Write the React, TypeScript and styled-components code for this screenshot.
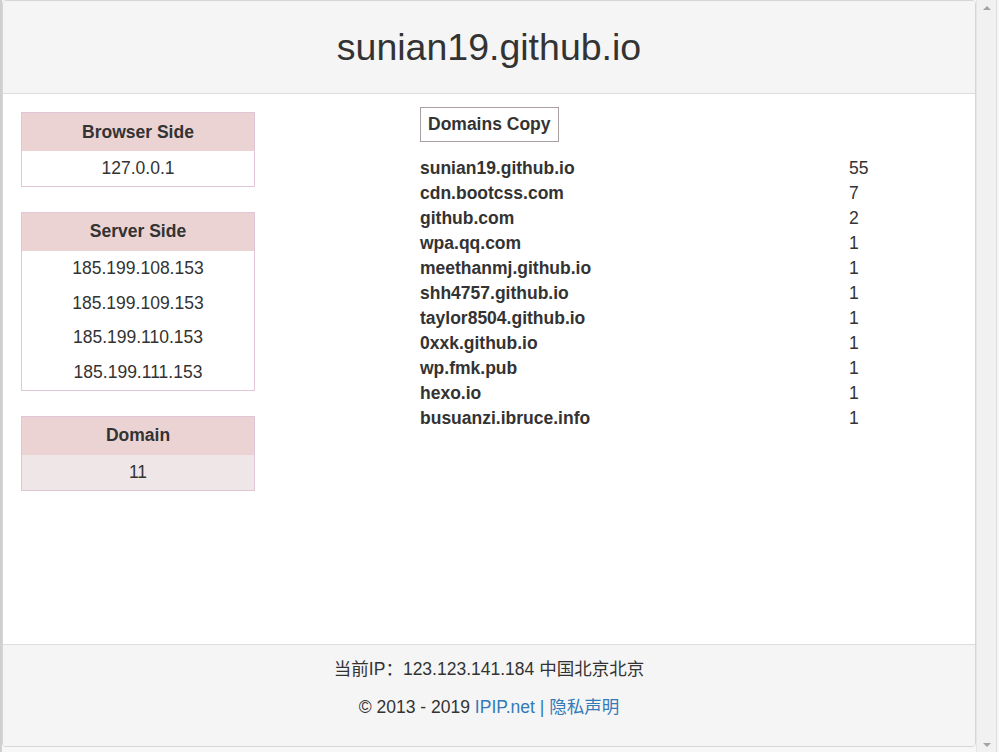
import styled, { createGlobalStyle } from 'styled-components';

const GlobalStyle = createGlobalStyle`
  html, body {
    margin: 0;
    padding: 0;
    background: #ececec;
  }
  body {
    font-family: "Liberation Sans", Arial, "Noto Sans CJK SC", sans-serif;
    color: #333;
  }
`;

const browserSide = ['127.0.0.1'];
const serverSide = ['185.199.108.153', '185.199.109.153', '185.199.110.153', '185.199.111.153'];
const domains: [string, number][] = [
  ['sunian19.github.io', 55],
  ['cdn.bootcss.com', 7],
  ['github.com', 2],
  ['wpa.qq.com', 1],
  ['meethanmj.github.io', 1],
  ['shh4757.github.io', 1],
  ['taylor8504.github.io', 1],
  ['0xxk.github.io', 1],
  ['wp.fmk.pub', 1],
  ['hexo.io', 1],
  ['busuanzi.ibruce.info', 1],
];

function InfoTable(props: { title: string; rows: string[]; shaded?: boolean }) {
  return (
    <InfoBox>
      <BoxHeader>{props.title}</BoxHeader>
      {props.rows.map((r) => (
        <BoxRow key={r} $shaded={props.shaded}>
          {r}
        </BoxRow>
      ))}
    </InfoBox>
  );
}

function App() {
  return (
    <Screen>
      <GlobalStyle />
      <Gutter />
      <Modal>
        <Header>
          <Title>sunian19.github.io</Title>
        </Header>
        <Body>
          <LeftColumn>
            <InfoTable title="Browser Side" rows={browserSide} />
            <InfoTable title="Server Side" rows={serverSide} />
            <InfoTable title="Domain" rows={['11']} shaded />
          </LeftColumn>
          <RightColumn>
            <CopyButton>Domains Copy</CopyButton>
            <DomainList>
              {domains.map(([name, count]) => (
                <DomainRow key={name}>
                  <DomainName>{name}</DomainName>
                  <DomainCount>{count}</DomainCount>
                </DomainRow>
              ))}
            </DomainList>
          </RightColumn>
        </Body>
        <Footer>
          <FooterLine>当前IP：123.123.141.184 中国北京北京</FooterLine>
          <FooterLine>
            © 2013 - 2019 <FooterLink>IPIP.net</FooterLink> <FooterLink>|</FooterLink>{' '}
            <FooterLink>隐私声明</FooterLink>
          </FooterLine>
        </Footer>
      </Modal>
      <Scrollbar>
        <ArrowUp />
        <ArrowDown />
      </Scrollbar>
    </Screen>
  );
}

export default App;

const Screen = styled.div`
  display: flex;
  width: 999px;
  height: 752px;
  overflow: hidden;
  background: #f7f7f7;
`;

const Gutter = styled.div`
  width: 2px;
  flex-shrink: 0;
  background: #cfcfcf;
`;

const Modal = styled.div`
  width: 974px;
  height: 747px;
  flex-shrink: 0;
  box-sizing: border-box;
  display: flex;
  flex-direction: column;
  background: #fff;
  border: 1px solid #d6d6d6;
  border-radius: 4px;
  overflow: hidden;
  font-size: 17.5px;
  line-height: 25px;
`;

const Header = styled.header`
  height: 92px;
  flex-shrink: 0;
  display: flex;
  align-items: center;
  justify-content: center;
  background: #f5f5f5;
  border-bottom: 1px solid #dddddd;
`;

const Title = styled.h1`
  margin: 0 0 1px;
  font-size: 37.5px;
  font-weight: 400;
  line-height: 42px;
  color: #333;
`;

const Body = styled.main`
  flex: 1;
  display: grid;
  grid-template-columns: 234px 1fr;
  column-gap: 165px;
  align-items: start;
  padding: 13px 18px 0;
`;

const LeftColumn = styled.div`
  display: flex;
  flex-direction: column;
  gap: 25px;
  margin-top: 5px;
`;

const InfoBox = styled.div`
  border: 1px solid #e3c5d8;
  text-align: center;
`;

const BoxHeader = styled.div`
  padding: 6.5px 8px;
  background: #ebd3d4;
  font-weight: 700;
`;

const BoxRow = styled.div<{ $shaded?: boolean }>`
  padding: 5px 8px 4.8px;
  background: ${(p) => (p.$shaded ? '#efe6e7' : '#fff')};
`;

const RightColumn = styled.div`
  display: flex;
  flex-direction: column;
  align-items: flex-start;
`;

const CopyButton = styled.button`
  font-family: inherit;
  font-size: 17.5px;
  font-weight: 700;
  line-height: 25px;
  color: #333;
  background: #fff;
  border: 1px solid #aaa0a0;
  border-radius: 0;
  padding: 4px 7px;
  margin: 0;
`;

const DomainList = styled.div`
  margin-top: 14px;
  display: flex;
  flex-direction: column;
`;

const DomainRow = styled.div`
  display: grid;
  grid-template-columns: 429px auto;
`;

const DomainName = styled.span`
  font-weight: 700;
`;

const DomainCount = styled.span`
  font-weight: 400;
`;

const Footer = styled.footer`
  height: 102px;
  flex-shrink: 0;
  box-sizing: border-box;
  padding-top: 12px;
  background: #f5f5f5;
  border-top: 1px solid #dddddd;
  text-align: center;
`;

const FooterLine = styled.p`
  margin: 0 0 13px;
`;

const FooterLink = styled.a`
  color: #337ab7;
  text-decoration: none;
`;

const Scrollbar = styled.div`
  width: 21px;
  flex-shrink: 0;
  display: flex;
  flex-direction: column;
  justify-content: space-between;
  align-items: center;
  padding: 6px 0 5px;
  box-sizing: border-box;
  background: #f1f1f1;
  border-left: 1px solid #e6e6e6;
  border-right: 1px solid #dcdcdc;
`;

const ArrowUp = styled.div`
  width: 0;
  height: 0;
  border-left: 4.5px solid transparent;
  border-right: 4.5px solid transparent;
  border-bottom: 4.5px solid #a3a3a3;
`;

const ArrowDown = styled.div`
  width: 0;
  height: 0;
  border-left: 4.5px solid transparent;
  border-right: 4.5px solid transparent;
  border-top: 4.5px solid #a3a3a3;
`;
